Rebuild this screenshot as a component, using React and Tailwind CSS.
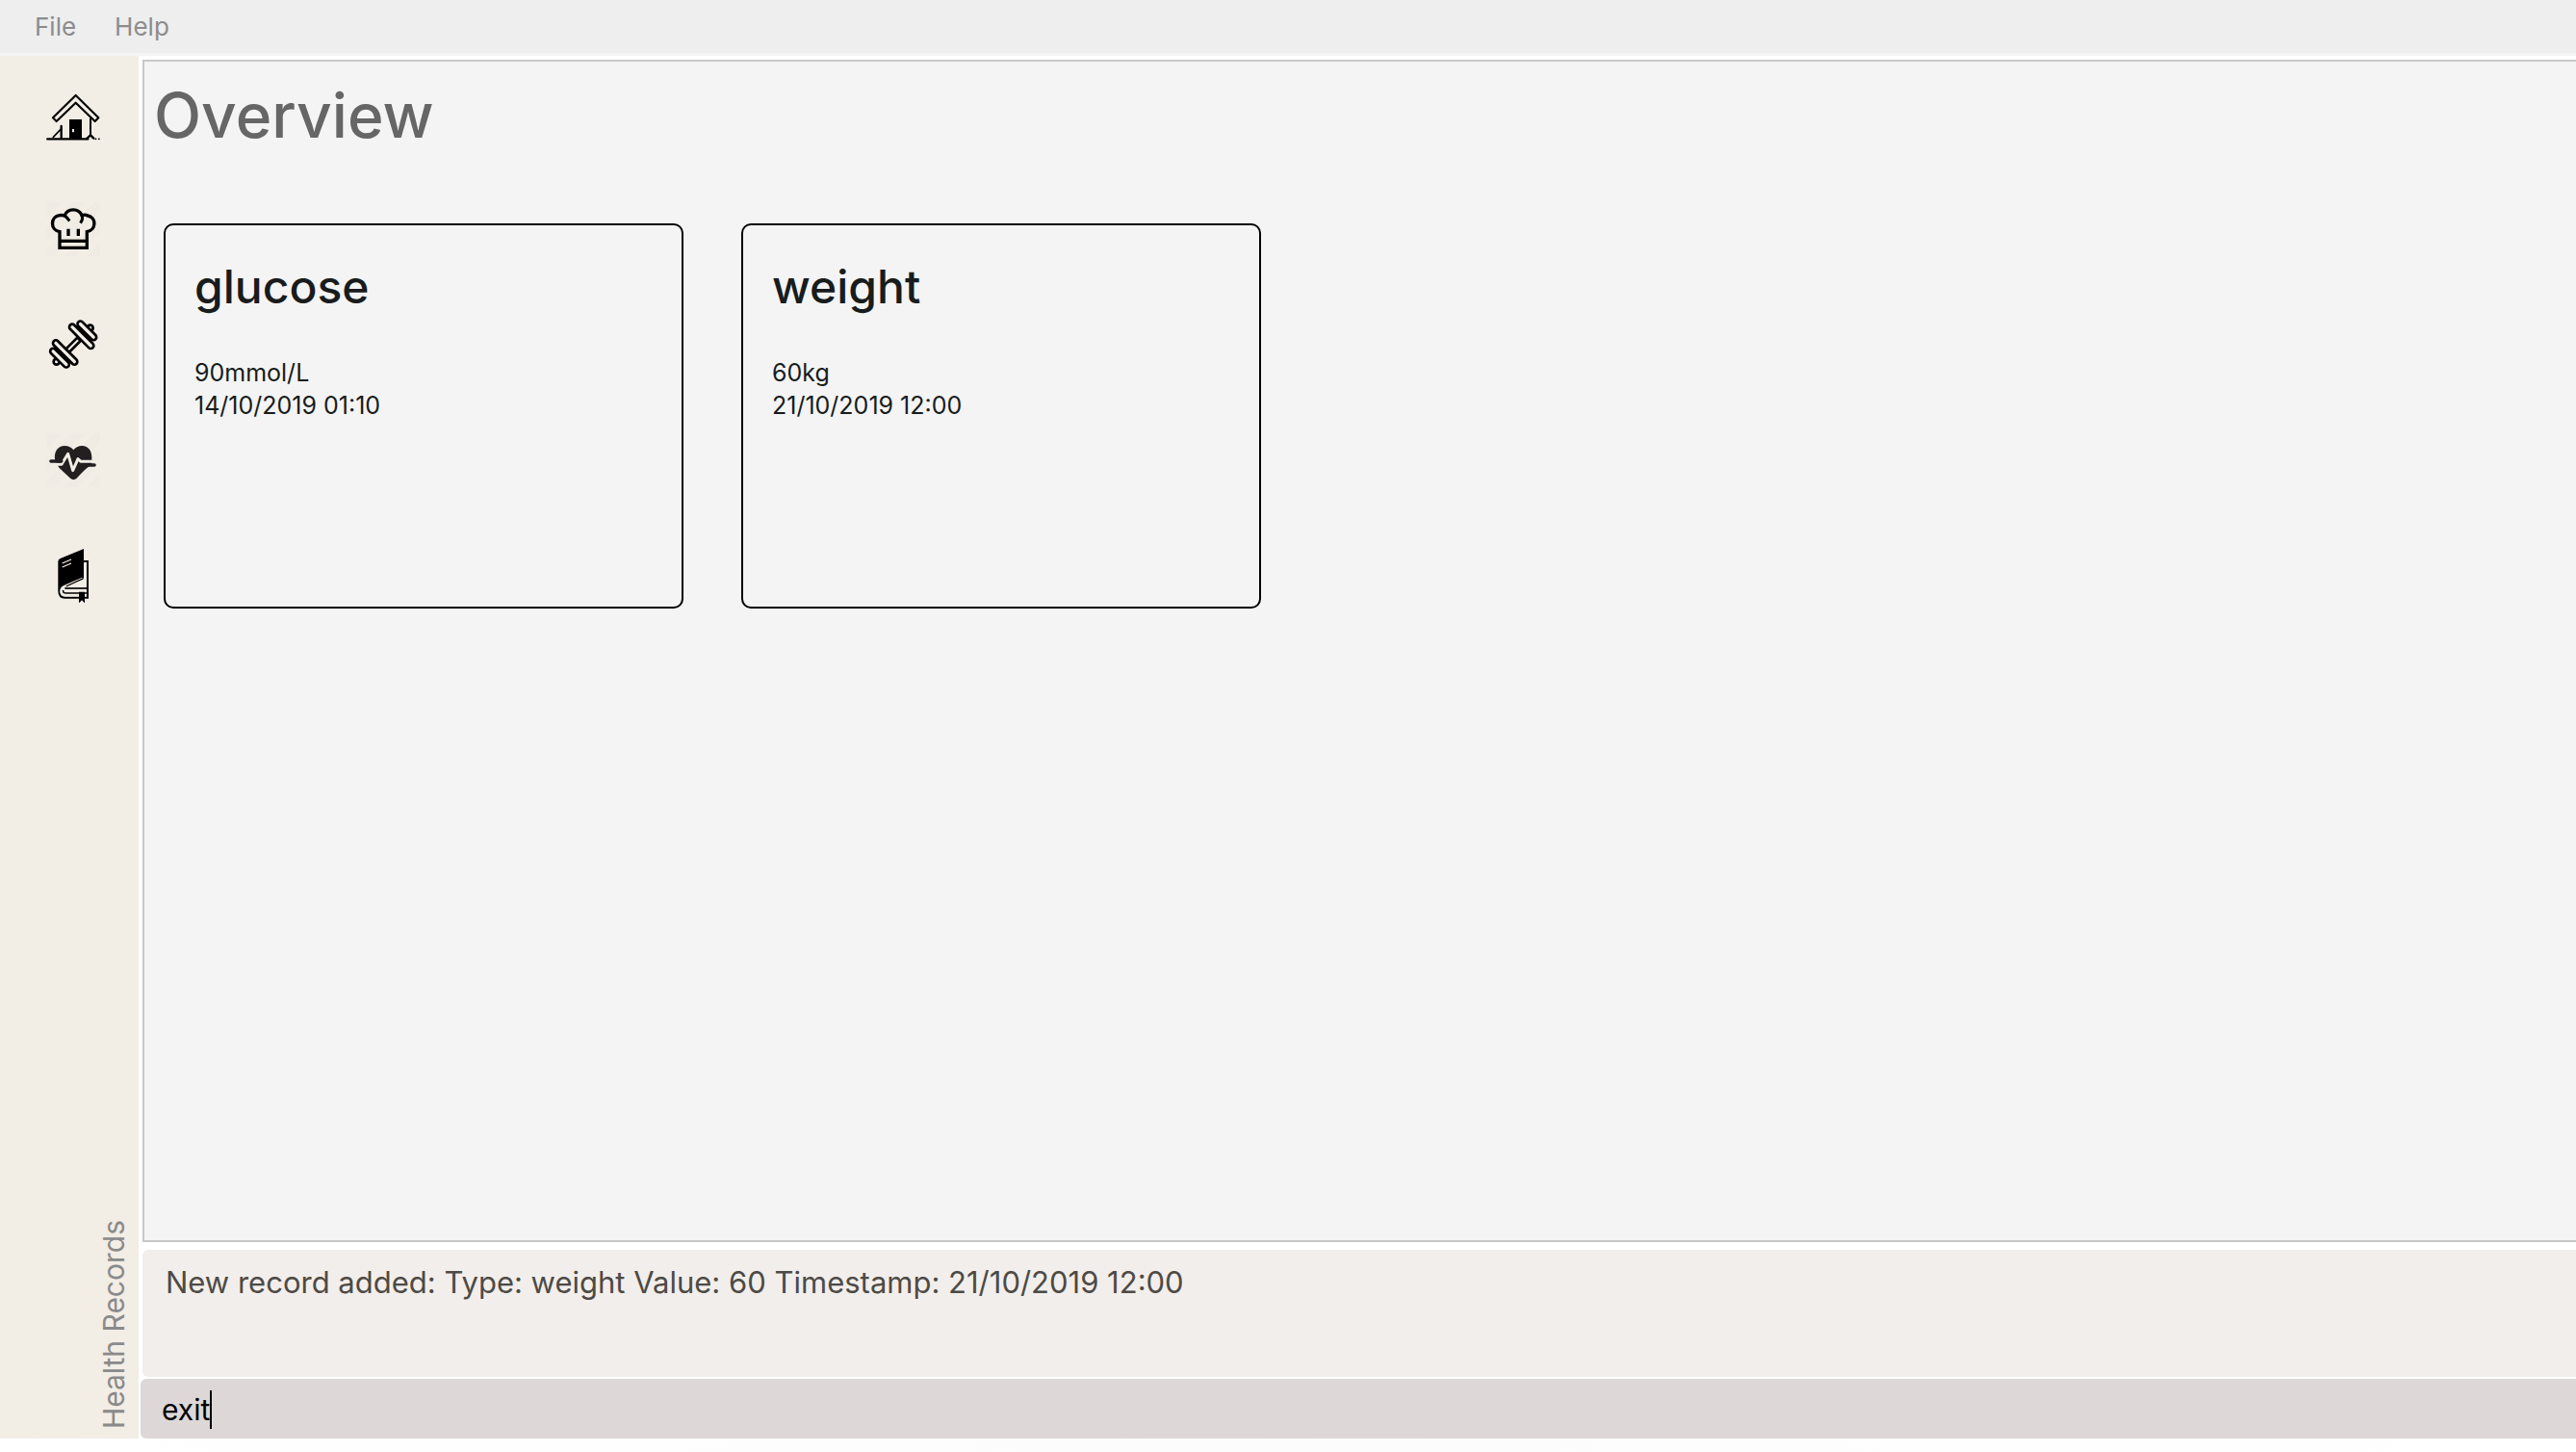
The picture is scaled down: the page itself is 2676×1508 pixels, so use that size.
import React, { useState } from "react";

function Hatch({ id }) {
  return (
    <>
      <defs>
        <pattern id={id} width="9" height="9" patternUnits="userSpaceOnUse">
          <path d="M-2 2L2 -2M0 9L9 0M7 11L11 7" stroke="#000" strokeOpacity="0.04" strokeWidth="2" />
        </pattern>
      </defs>
      <path
        d="M54 60h50L54 110zM135 60h40L54 181v-40zM205 60h17v24L78 228H54v-17zM222 115v40l-73 73h-40zM222 185v43h-43z"
        fill={`url(#${id})`}
        stroke="none"
      />
    </>
  );
}

function HomeIcon() {
  return (
    <svg viewBox="54 30 168 168" className="size-14" fill="none" stroke="#000" aria-hidden="true">
      <path d="M146 57L75 127L86 138L146 80L206 138L217 127Z" strokeWidth="6.5" strokeLinejoin="round" />
      <path d="M58 193H184" strokeWidth="7" strokeLinecap="round" />
      <path d="M126 132H165V193H126Z" fill="#000" stroke="none" />
      <path d="M135 162H141V172H135Z" fill="#f2ede5" stroke="none" />
      <path d="M192 128V182" strokeWidth="6" />
      <path d="M180 192L192 181L202 191" strokeWidth="7" strokeLinecap="round" strokeLinejoin="round" />
      <path d="M101 153V191" strokeWidth="7" strokeLinecap="round" />
      <path d="M99 163L76 187" strokeWidth="5" strokeLinecap="round" />
      <path d="M208 193H209M218 193H219" strokeWidth="5" strokeLinecap="round" />
    </svg>
  );
}

function ChefIcon() {
  return (
    <svg viewBox="54 60 168 168" className="size-14" fill="none" stroke="#000" aria-hidden="true">
      <Hatch id="hatch-chef" />
      <path
        d="M96 202V152C66 148 66 104 96 101C102 100 107 101 111 102C121 78 155 78 165 101C171 99 178 99 183 102C211 106 211 147 181 152V202Z"
        strokeWidth="10"
        strokeLinejoin="miter"
      />
      <path d="M111 102C116 104 120 110 124 115" strokeWidth="9" strokeLinecap="square" />
      <path d="M165 101C168 108 167 115 163 121" strokeWidth="9" strokeLinecap="square" />
      <path d="M123 143V165M154 143V165" strokeWidth="10" />
      <path d="M96 181H181" strokeWidth="10" />
    </svg>
  );
}

function DumbbellIcon() {
  return (
    <svg viewBox="54 60 168 168" className="size-14" stroke="#000" fill="#f2ede5" aria-hidden="true">
      <circle cx="191" cy="92" r="9" strokeWidth="8" />
      <circle cx="86" cy="197" r="9" strokeWidth="8" />
      <path d="M115 158L151 122L161 132L125 168Z" strokeWidth="8" />
      <rect x="-38" y="-9" width="76" height="18" rx="9" strokeWidth="8" transform="translate(181 100) rotate(45)" />
      <rect x="-50" y="-9" width="100" height="18" rx="9" strokeWidth="8" transform="translate(164 118) rotate(45)" />
      <rect x="-38" y="-9" width="76" height="18" rx="9" strokeWidth="8" transform="translate(96 185) rotate(45)" />
      <rect x="-50" y="-9" width="100" height="18" rx="9" strokeWidth="8" transform="translate(113 168) rotate(45)" />
    </svg>
  );
}

function HeartIcon() {
  return (
    <svg viewBox="54 60 168 168" className="size-14" fill="none" aria-hidden="true">
      <Hatch id="hatch-heart" />
      <path
        d="M81 141C78 115 92 99 111 99C124 99 133 104 139 112C145 104 154 99 166 99C185 99 198 115 196 142V160C180 164 166 184 148 201Q139 208 130 201L94 167Z"
        fill="#231f20"
      />
      <path d="M70 157H102L122 124L137 176L153 140L162 148H216" stroke="#f2ede5" strokeWidth="9" strokeLinejoin="round" />
      <path d="M69 147H101" stroke="#231f20" strokeWidth="11" strokeLinecap="round" />
      <path d="M162 159H204" stroke="#231f20" strokeWidth="11" strokeLinecap="round" />
    </svg>
  );
}

function BookIcon() {
  return (
    <svg viewBox="54 60 168 168" className="size-14" fill="none" stroke="#000" aria-hidden="true">
      <path d="M171 99H183V212H112Q94 212 94 192" strokeWidth="6" />
      <path d="M171 60V150L108 176Q98 182 98 192H91V100Q91 93 98 90Z" fill="#000" stroke="none" />
      <path d="M167 152L112 176Q98 182 100 194Q102 205 116 205H180" stroke="#f2ede5" strokeWidth="6" />
      <path d="M170 152L116 177" strokeWidth="4" />
      <path d="M112 183H180" strokeWidth="5" />
      <path d="M107 189Q105 198 116 198H180" strokeWidth="5" />
      <path d="M104 105L132 93M104 117L132 105" stroke="#f2ede5" strokeWidth="4" />
      <path d="M156 194H174V229L165 220L156 229Z" fill="#000" stroke="none" />
    </svg>
  );
}

const NAV = [
  { label: "Overview", Icon: HomeIcon },
  { label: "Food", Icon: ChefIcon },
  { label: "Exercise", Icon: DumbbellIcon },
  { label: "Health Records", Icon: HeartIcon },
  { label: "Diary", Icon: BookIcon },
];

const RECORDS = [
  { type: "glucose", value: "90mmol/L", time: "14/10/2019 01:10" },
  { type: "weight", value: "60kg", time: "21/10/2019 12:00" },
];

export default function App() {
  const [command, setCommand] = useState("exit");

  return (
    <div className="flex min-h-screen flex-col bg-white font-['Inter',sans-serif]">
      <header className="flex h-[58px] items-center gap-10 border-b-3 border-[#f4f4f4] bg-[#eeeeee] px-9 text-[26px] text-[#8c8c8c]">
        <button type="button">File</button>
        <button type="button">Help</button>
      </header>

      <div className="flex flex-1">
        <aside className="flex w-36 shrink-0 flex-col justify-between bg-[#f2ede5] pt-8 pb-2.5">
          <nav className="flex flex-col items-center gap-16 pl-2">
            {NAV.map(({ label, Icon }) => (
              <button key={label} type="button" aria-label={label}>
                <Icon />
              </button>
            ))}
          </nav>
          <p className="mr-1.5 rotate-180 self-end text-[30px] leading-10 text-[#8a8a8a] [writing-mode:vertical-rl]">
            Health Records
          </p>
        </aside>

        <main className="flex min-w-0 flex-1 flex-col pt-1">
          <section className="ml-1 flex-1 border-y-2 border-l-2 border-[#c8c8c8] bg-[#f4f4f4] pl-2.5">
            <h1 className="pt-4 text-[64px] leading-20 font-medium text-[#666666]">Overview</h1>
            <div className="mt-18 flex flex-wrap gap-15 pl-2.5">
              {RECORDS.map((r) => (
                <article
                  key={r.type}
                  className="h-100 w-135 rounded-[10px] border-2 border-black px-7.5 pt-8 text-[#181c1c]"
                >
                  <h2 className="text-[48px] leading-16 font-medium">{r.type}</h2>
                  <div className="mt-10 text-[25px] leading-[34px]">
                    <p>{r.value}</p>
                    <p>{r.time}</p>
                  </div>
                </article>
              ))}
            </div>
          </section>

          <output className="mt-2 ml-1 block h-33 rounded-l-md bg-[#f2eeeb] px-6 pt-3 text-[31px] leading-11 text-[#4d4a45]">
            New record added: Type: weight Value: 60 Timestamp: 21/10/2019 12:00
          </output>

          <label className="mt-0.5 ml-0.5 flex h-15.5 cursor-text items-center rounded-l-md bg-[#ddd7d7] pt-0.5 pl-5.5">
            <input
              type="text"
              aria-label="Command"
              value={command}
              onChange={(e) => setCommand(e.target.value)}
              className="field-sizing-content bg-transparent text-[30px] leading-10 text-black caret-transparent outline-none"
            />
            <span className="h-10 w-0.5 bg-black" />
          </label>
        </main>
      </div>

      <div className="h-3.5 bg-linear-to-r from-white via-[#fcfcfc] to-white" />
    </div>
  );
}
